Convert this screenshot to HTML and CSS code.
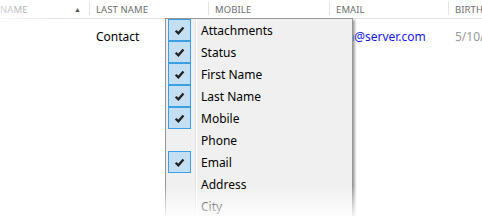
FILE: index.html
```html
<!DOCTYPE html>
<html>
<head>
<meta charset="utf-8">
<link rel="stylesheet" href="styles.css">
</head>
<body>
<div class="view">
  <div class="header">
    <div class="hcell c1"><span>NAME</span><span class="sort">&#9650;</span></div>
    <div class="hcell c2">LAST NAME</div>
    <div class="hcell c3">MOBILE</div>
    <div class="hcell c4">EMAIL</div>
    <div class="hcell c5">BIRTHDAY</div>
  </div>
  <div class="row">
    <div class="cell c1"></div>
    <div class="cell c2">Contact</div>
    <div class="cell c3"></div>
    <div class="cell c4 email">john@server.com</div>
    <div class="cell c5 date">5/10/1980</div>
  </div>

  <div class="menu">
    <div class="item"><span class="check on"><svg viewBox="0 0 10 10"><path d="M1.5 5.2 L4 7.6 L8.6 2.2" /></svg></span><span class="label">Attachments</span></div>
    <div class="item"><span class="check on"><svg viewBox="0 0 10 10"><path d="M1.5 5.2 L4 7.6 L8.6 2.2" /></svg></span><span class="label">Status</span></div>
    <div class="item"><span class="check on"><svg viewBox="0 0 10 10"><path d="M1.5 5.2 L4 7.6 L8.6 2.2" /></svg></span><span class="label">First Name</span></div>
    <div class="item"><span class="check on"><svg viewBox="0 0 10 10"><path d="M1.5 5.2 L4 7.6 L8.6 2.2" /></svg></span><span class="label">Last Name</span></div>
    <div class="item"><span class="check on"><svg viewBox="0 0 10 10"><path d="M1.5 5.2 L4 7.6 L8.6 2.2" /></svg></span><span class="label">Mobile</span></div>
    <div class="item"><span class="check"></span><span class="label">Phone</span></div>
    <div class="item"><span class="check on"><svg viewBox="0 0 10 10"><path d="M1.5 5.2 L4 7.6 L8.6 2.2" /></svg></span><span class="label">Email</span></div>
    <div class="item"><span class="check"></span><span class="label">Address</span></div>
    <div class="item"><span class="check"></span><span class="label">City</span></div>
  </div>

  <div class="fade-left"></div>
  <div class="fade-bottom"></div>
</div>
</body>
</html>
```

FILE: styles.css
```css
html, body {
  margin: 0;
  padding: 0;
  background: #ffffff;
}
body {
  font-family: "Noto Sans", "Open Sans", sans-serif;
  overflow: hidden;
}
.view {
  position: relative;
  width: 482px;
  height: 216px;
  overflow: hidden;
}
.header {
  display: flex;
  height: 19px;
  border-bottom: 1px solid #e3e3e3;
  box-sizing: border-box;
}
.hcell {
  position: relative;
  display: flex;
  align-items: center;
  box-sizing: border-box;
  font-size: 9.5px;
  color: #6e6e6e;
  letter-spacing: 0.1px;
  white-space: nowrap;
  overflow: hidden;
  padding-left: 7px;
}
.hcell + .hcell::before {
  content: "";
  position: absolute;
  left: 0;
  top: 2px;
  bottom: 3px;
  border-left: 1px solid #e3e3e3;
}
.c1 { width: 89px; flex: none; }
.c2 { width: 119px; flex: none; }
.c3 { width: 121px; flex: none; }
.c4 { width: 119px; flex: none; }
.c5 { flex: 1; min-width: 0; }
.header .c1 {
  padding-left: 0;
  justify-content: space-between;
  padding-right: 8px;
}
.sort {
  font-size: 7px;
  color: #555;
}
.row {
  display: flex;
  height: 22px;
  margin-top: 6px;
  align-items: center;
}
.cell {
  box-sizing: border-box;
  padding-left: 7px;
  font-size: 12px;
  color: #000;
  white-space: nowrap;
  overflow: hidden;
}
.email { color: #1414e6; padding-left: 0; }
.date { color: #999; padding-left: 7px; }

.menu {
  position: absolute;
  left: 165px;
  top: 18px;
  width: 188px;
  height: 220px;
  background: #f0f0f0;
  border: 1px solid #979797;
  box-sizing: border-box;
  box-shadow: 2px 2px 2px rgba(0,0,0,0.35);
  padding: 0 2px;
}
.menu::before {
  content: "";
  position: absolute;
  left: 29px;
  top: 0;
  bottom: 0;
  border-left: 1px solid #e2e2e2;
  box-shadow: 1px 0 0 #ffffff;
}
.item {
  display: flex;
  align-items: center;
  height: 22px;
}
.check {
  width: 23px;
  height: 22px;
  box-sizing: border-box;
  display: flex;
  align-items: center;
  justify-content: center;
  flex: none;
}
.check.on {
  background: #c3dff1;
  border: 1px solid #3c9ee4;
}
.check svg {
  width: 11px;
  height: 11px;
  fill: none;
  stroke: #222;
  stroke-width: 2.1;
}
.label {
  margin-left: 10px;
  font-size: 12px;
  color: #000;
  white-space: nowrap;
}
.fade-left {
  position: absolute;
  left: 0;
  top: 0;
  width: 70px;
  height: 20px;
  background: linear-gradient(to right, rgba(255,255,255,0.7), rgba(255,255,255,0));
}
.fade-bottom {
  position: absolute;
  left: 0;
  right: 0;
  bottom: 0;
  height: 30px;
  background: linear-gradient(to bottom, rgba(255,255,255,0), rgba(255,255,255,0.85));
}
```
